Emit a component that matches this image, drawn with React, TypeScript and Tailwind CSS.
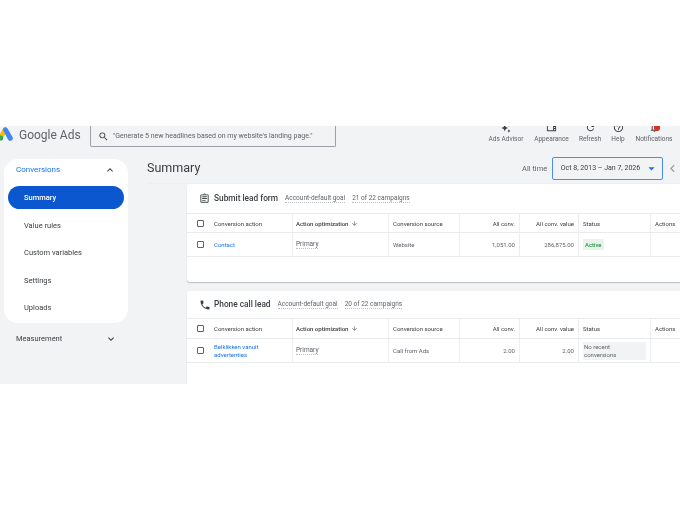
import React from "react";
import {
  MdAutoAwesome,
  MdOutlineViewSidebar,
  MdRefresh,
  MdHelpOutline,
  MdOutlineNotifications,
  MdSearch,
  MdExpandLess,
  MdExpandMore,
  MdOutlineAssignment,
  MdPhone,
  MdArrowDropDown,
  MdChevronLeft,
  MdArrowDownward,
} from "react-icons/md";

const cols = "grid grid-cols-[106px_96px_71px_60px_59px_72px_40px]";
const cell = "flex items-center border-r border-[#eceef0] px-1";

function TopAction({ icon, label, w }: { icon: React.ReactNode; label: string; w: string }) {
  return (
    <div className={`flex flex-col items-center ${w}`}>
      <div className="h-[7px] flex items-end overflow-hidden text-[#3c4043]">{icon}</div>
      <div className="text-[6.5px] leading-[10px] mt-[1px] text-[#5f6368] whitespace-nowrap">{label}</div>
    </div>
  );
}

function Underlined({ children }: { children: React.ReactNode }) {
  return <span className="border-b border-dotted border-[#bdc1c6] text-[6.5px] leading-[8px] text-[#5f6368] whitespace-nowrap">{children}</span>;
}

function Checkbox() {
  return <div className="w-[7px] h-[7px] border border-[#5f6368] rounded-[1px] shrink-0" />;
}

function Card({
  icon,
  title,
  campaigns,
  headH,
  colH,
  rowH,
  first,
  source,
  conv,
  value,
  status,
  heightCls,
}: {
  icon: React.ReactNode;
  title: string;
  campaigns: string;
  headH: string;
  colH: string;
  rowH: string;
  first: React.ReactNode;
  source: string;
  conv: string;
  value: string;
  status: React.ReactNode;
  heightCls: string;
}) {
  return (
    <div className={`bg-white rounded-tl-[3px] rounded-bl-[3px] shadow-[0_1px_1px_rgba(60,64,67,0.3)] w-[504px] ${heightCls}`}>
      <div className={`flex items-center ${headH} pl-[12px]`}>
        <div className="w-[15px] shrink-0 text-[#3c4043] flex">{icon}</div>
        <span className="text-[8.3px] font-medium text-[#3c4043] whitespace-nowrap mr-[7px]">{title}</span>
        <Underlined>Account-default goal</Underlined>
        <div className="ml-[7px] flex">
          <Underlined>{campaigns}</Underlined>
        </div>
      </div>
      <div className={`${cols} ${colH} border-y border-[#e8eaed] text-[6px] text-[#3c4043]`}>
        <div className={`${cell} gap-[10px] pl-[10px]`}>
          <Checkbox />
          <span className="whitespace-nowrap">Conversion action</span>
        </div>
        <div className={`${cell} font-medium gap-[3px] pl-[3px] whitespace-nowrap`}>
          Action optimization
          <MdArrowDownward size={7} className="text-[#5f6368]" />
        </div>
        <div className={cell}>Conversion source</div>
        <div className={`${cell} justify-end`}>All conv.</div>
        <div className={`${cell} justify-end whitespace-nowrap`}>All conv. value</div>
        <div className={cell}>Status</div>
        <div className={`${cell} border-r-0`}>Actions</div>
      </div>
      <div className={`${cols} ${rowH} border-b border-[#e8eaed] text-[6px] text-[#5f6368]`}>
        <div className={`${cell} gap-[10px] pl-[10px]`}>
          <Checkbox />
          <span className="text-[#1a73e8] leading-[7.5px]">{first}</span>
        </div>
        <div className={`${cell} pl-[3px]`}>
          <Underlined>Primary</Underlined>
        </div>
        <div className={cell}>{source}</div>
        <div className={`${cell} justify-end`}>{conv}</div>
        <div className={`${cell} justify-end`}>{value}</div>
        <div className={cell}>{status}</div>
        <div className={`${cell} border-r-0`} />
      </div>
    </div>
  );
}

export default function App() {
  const items = ["Value rules", "Custom variables", "Settings", "Uploads"];
  return (
    <div className="bg-white h-[510px] w-[680px] overflow-hidden font-['Roboto',sans-serif]">
      <div className="h-[126px]" />
      <div className="h-[258px] bg-[#f1f3f4] overflow-hidden blur-[0.35px]">
        <div className="flex h-[31px] items-start">
          <svg width="17" height="15" viewBox="0 0 17 15" className="-ml-[3px] mt-[1px] shrink-0">
            <path d="M6 1.5 L2 8.5 L6 11 L10 4 Z" fill="#fbbc04" />
            <path d="M10.5 1.5 A2.4 2.4 0 0 0 6 3 L11 12.5 A2.4 2.4 0 0 0 15.5 10 Z" fill="#4285f4" />
            <circle cx="3.6" cy="11" r="2.6" fill="#34a853" />
          </svg>
          <span className="ml-[5px] mt-[2px] text-[12px] leading-[14px] text-[#5f6368] whitespace-nowrap w-[71px]">Google Ads</span>
          <div className="w-[246px] h-[21px] bg-[#f1f3f4] border border-t-0 border-[#9aa0a6] rounded-b-[2px] flex items-center pl-[7px] gap-[4px]">
            <MdSearch size={11} className="text-[#3c4043]" />
            <span className="text-[7px] text-[#5f6368] whitespace-nowrap">"Generate 5 new headlines based on my website's landing page."</span>
          </div>
          <div className="ml-[152px] flex gap-[10px]">
            <TopAction w="w-[36px]" label="Ads Advisor" icon={<MdAutoAwesome size={10} />} />
            <TopAction w="w-[35px]" label="Appearance" icon={<MdOutlineViewSidebar size={11} />} />
            <TopAction w="w-[22px]" label="Refresh" icon={<MdRefresh size={11} />} />
            <TopAction w="w-[14px]" label="Help" icon={<MdHelpOutline size={11} />} />
            <div className="relative">
              <TopAction w="w-[38px]" label="Notifications" icon={<MdOutlineNotifications size={11} />} />
              <div className="absolute right-[13px] top-0 w-[6px] h-[5px] bg-[#d93025] rounded-b-[3px]" />
            </div>
          </div>
        </div>
        <div className="flex">
          <div className="w-[124px] ml-[4px] shrink-0 mt-[2px]">
            <div className="bg-white rounded-[14px] h-[164px] px-[4px]">
              <div className="flex items-center justify-between h-[27px] pb-[5px] pl-[8px] pr-[8px] text-[8px] text-[#1a73e8]">
                Conversions
                <MdExpandLess size={12} className="text-[#3c4043]" />
              </div>
              <div className="bg-[#0b57d0] rounded-full h-[23px] flex items-center pl-[16px] text-[7.5px] font-medium text-white mb-[2.5px]">Summary</div>
              {items.map((t) => (
                <div key={t} className="h-[27.5px] flex items-center pl-[16px] text-[7.5px] text-[#3c4043]">
                  {t}
                </div>
              ))}
            </div>
            <div className="flex items-center justify-between h-[32px] pl-[12px] pr-[11px] text-[7.5px] text-[#3c4043]">
              Measurement
              <MdExpandMore size={12} className="text-[#3c4043]" />
            </div>
          </div>
          <div className="ml-[19px] w-[533px] shrink-0">
            <div className="flex items-start h-[27px] border-b border-[#eceef0]">
              <span className="text-[12.5px] text-[#3c4043] w-[378px] h-[23px] flex items-center">Summary</span>
              <span className="text-[7.5px] text-[#5f6368] w-[30px] h-[23px] flex items-center whitespace-nowrap">All time</span>
              <div className="w-[112px] h-[23px] border-[1.5px] border-[#4a90e2] rounded-[2px] flex items-center justify-between pl-[8px] pr-[3px] text-[7px] text-[#3c4043] whitespace-nowrap">
                Oct 8, 2013 – Jan 7, 2026
                <MdArrowDropDown size={15} className="text-[#1a73e8]" />
              </div>
              <MdChevronLeft size={15} className="text-[#9aa0a6] ml-[2px] mt-[4px] shrink-0" />
            </div>
            <div className="ml-[40px] flex flex-col gap-[9px]">
              <Card
                icon={<MdOutlineAssignment size={11} />}
                title="Submit lead form"
                campaigns="21 of 22 campaigns"
                headH="h-[29px]"
                colH="h-[20px]"
                rowH="h-[24px]"
                first="Contact"
                source="Website"
                conv="1,051.00"
                value="286,875.00"
                status={<span className="bg-[#e6f4ea] text-[#188038] px-[2px] py-[2px] leading-[7px]">Active</span>}
                heightCls="h-[98px]"
              />
              <Card
                icon={<MdPhone size={12} />}
                title="Phone call lead"
                campaigns="20 of 22 campaigns"
                headH="h-[27px]"
                colH="h-[21px]"
                rowH="h-[24px]"
                first={
                  <>
                    Belklikken vanuit
                    <br />
                    advertenties
                  </>
                }
                source="Call from Ads"
                conv="2.00"
                value="2.00"
                status={
                  <span className="bg-[#f1f3f4] w-[63px] px-[1px] py-[1px] leading-[8px]">
                    No recent
                    <br />
                    conversions
                  </span>
                }
                heightCls="h-[100px]"
              />
            </div>
          </div>
        </div>
      </div>
    </div>
  );
}
